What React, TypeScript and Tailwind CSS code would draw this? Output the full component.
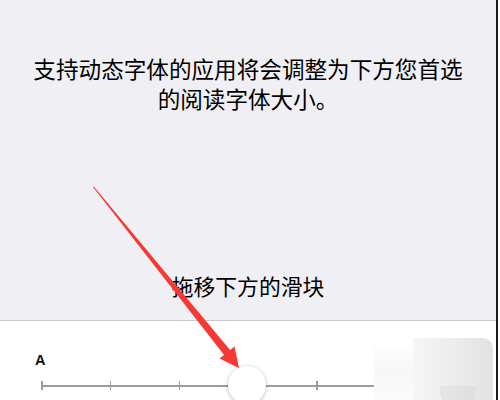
import React from "react";

export default function App() {
  const cjk = { fontFamily: '"Noto Sans CJK SC", "Noto Sans", sans-serif' };
  return (
    <div className="relative flex h-[400px] w-[500px] overflow-hidden bg-white">
      <div className="flex h-[400px] w-[496px] flex-col">
        <div
          className="flex h-[320px] flex-col items-center bg-[#efeff4] pt-[54px] pb-[19px] text-black"
          style={cjk}
        >
          <p className="text-center text-[22.6px] leading-[30px]">
            支持动态字体的应用将会调整为下方您首选
            <br />
            的阅读字体大小。
          </p>
          <p className="mt-auto text-center text-[21.8px] leading-[30px]">拖移下方的滑块</p>
        </div>
        <div className="flex-1 border-t border-[#c8c7cc] bg-white pt-[32px]">
          <div
            className="pl-[35px] text-[14.5px] leading-[14px] font-semibold text-[#111]"
            style={{ fontFamily: '"Liberation Sans", Arial, sans-serif' }}
          >
            A
          </div>
          <div className="relative ml-[41px] mt-[14px] flex h-[9px] w-[414px] items-center justify-between">
            <div className="absolute inset-x-0 top-[4px] h-[1.5px] bg-[#9c9c9c]" />
            {[0, 1, 2, 3, 4, 5, 6].map((i) => (
              <div key={i} className="relative h-[9px] w-[1.5px] bg-[#9c9c9c]" />
            ))}
            <div className="absolute left-[187px] top-[-15px] h-[38px] w-[38px] rounded-full bg-white shadow-[0_1px_4px_rgba(0,0,0,0.28)]" />
          </div>
        </div>
      </div>
      <div className="h-[400px] w-[2px] bg-[#1c1c1c]" />

      {/* watermark */}
      <div className="absolute left-[374px] top-[346px] h-[54px] w-[40px] bg-gradient-to-b from-[#fdfdfd] via-[#f7f7f7] to-[#fbfbfb]" />
      <div className="absolute left-[413px] top-[338px] h-[62px] w-[80px] rounded-tr-[10px] bg-gradient-to-r from-[#f6f6f6] via-[#ececec] to-[#e2e2e2]" />
      <div className="absolute left-[440px] top-[386px] h-[20px] w-[36px] rounded-b-[14px] bg-[#d9d9d9] opacity-50" />

      {/* red arrow */}
      <svg className="pointer-events-none absolute left-0 top-0" width="500" height="400" viewBox="0 0 500 400">
        <polygon points="93,187 93.8,186.4 230.5,350.5 224.5,355.5" fill="#f53a36" />
        <polygon points="239,368 219.5,358.5 234.5,346.5" fill="#f53a36" />
      </svg>
    </div>
  );
}
